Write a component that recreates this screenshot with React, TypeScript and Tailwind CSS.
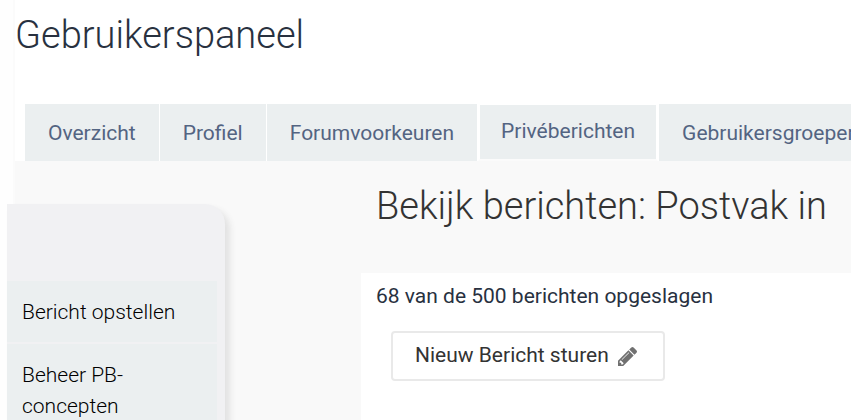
import React from 'react';

const tabs = ['Overzicht', 'Profiel', 'Forumvoorkeuren', 'Privéberichten', 'Gebruikersgroepen'];
const activeTab = 'Privéberichten';

const menuItems = ['Bericht opstellen', 'Beheer PB-concepten'];

function PencilIcon() {
  return (
    <svg viewBox="0 149 1515 1515" className="size-[19px] fill-[#707070]" aria-hidden="true">
      <path d="M363 1536l91-91-235-235-91 91v107h128v128h107zm523-928q0-22-22-22-10 0-17 7l-542 542q-7 7-7 17 0 22 22 22 10 0 17-7l542-542q7-7 7-17zm-54-192l416 416-832 832h-416v-416zm683 96q0 53-37 90l-166 166-416-416 166-165q36-38 90-38 53 0 91 38l235 234q37 39 37 91z" />
    </svg>
  );
}

function Tabs() {
  return (
    <nav className="flex shrink-0 gap-px pl-2.5 whitespace-nowrap text-[21px] leading-7">
      {tabs.map((tab) => (
        <a
          key={tab}
          href="#"
          className={`h-[57px] shrink-0 text-[#536482] bg-[#ebeff0] ${
            tab === activeTab
              ? 'border-t border-b-2 border-x-2 border-t-white border-x-white border-b-[#fbfbfb] px-[21px] pt-3'
              : 'px-[23px] pt-[15px]'
          }`}
        >
          {tab}
        </a>
      ))}
    </nav>
  );
}

function Sidebar() {
  return (
    <aside className="w-[218px] shrink-0 -ml-2 mt-[43px] pt-[77px] pr-2 bg-[#f1f1f3] rounded-tr-[20px] shadow-[5px_5px_6px_#e2e2e2]">
      <ul className="flex flex-col gap-0.5">
        {menuItems.map((item) => (
          <li key={item}>
            <a href="#" className="block bg-[#ebeff0] px-[15px] pt-4 pb-3.5 text-[21px] leading-[31px] font-light text-black">
              <span className="block max-w-[160px]">{item}</span>
            </a>
          </li>
        ))}
      </ul>
    </aside>
  );
}

export default function App() {
  return (
    <div className="h-screen overflow-hidden bg-[#fefefe] pl-[13px] font-['Roboto',sans-serif]">
      <div className="flex h-full flex-col border-l-2 border-[#fbfbfb] bg-white">
        <h1 className="h-[104px] shrink-0 pt-3 text-[38px] leading-[46px] font-light text-[#28313f]">Gebruikerspaneel</h1>
        <Tabs />
        <div className="flex grow bg-[#f9f9f9]">
          <Sidebar />
          <main className="flex grow flex-col pl-[136px]">
            <h2 className="h-28 shrink-0 pl-[15px] pt-[22px] text-[38px] leading-[46px] font-light whitespace-nowrap text-[#333333]">
              Bekijk berichten: Postvak in
            </h2>
            <section className="grow bg-white pl-[15px] pt-2">
              <p className="text-[21px] leading-[30px] text-[#28313f]">68 van de 500 berichten opgeslagen</p>
              <button
                type="button"
                className="mt-5 ml-[15px] flex h-[50px] items-center gap-[9px] rounded border-2 border-[#e9e9e9] bg-white pl-[22px] pr-[26px] text-[21px] text-[#333333]"
              >
                Nieuw Bericht sturen
                <PencilIcon />
              </button>
            </section>
          </main>
        </div>
      </div>
    </div>
  );
}
